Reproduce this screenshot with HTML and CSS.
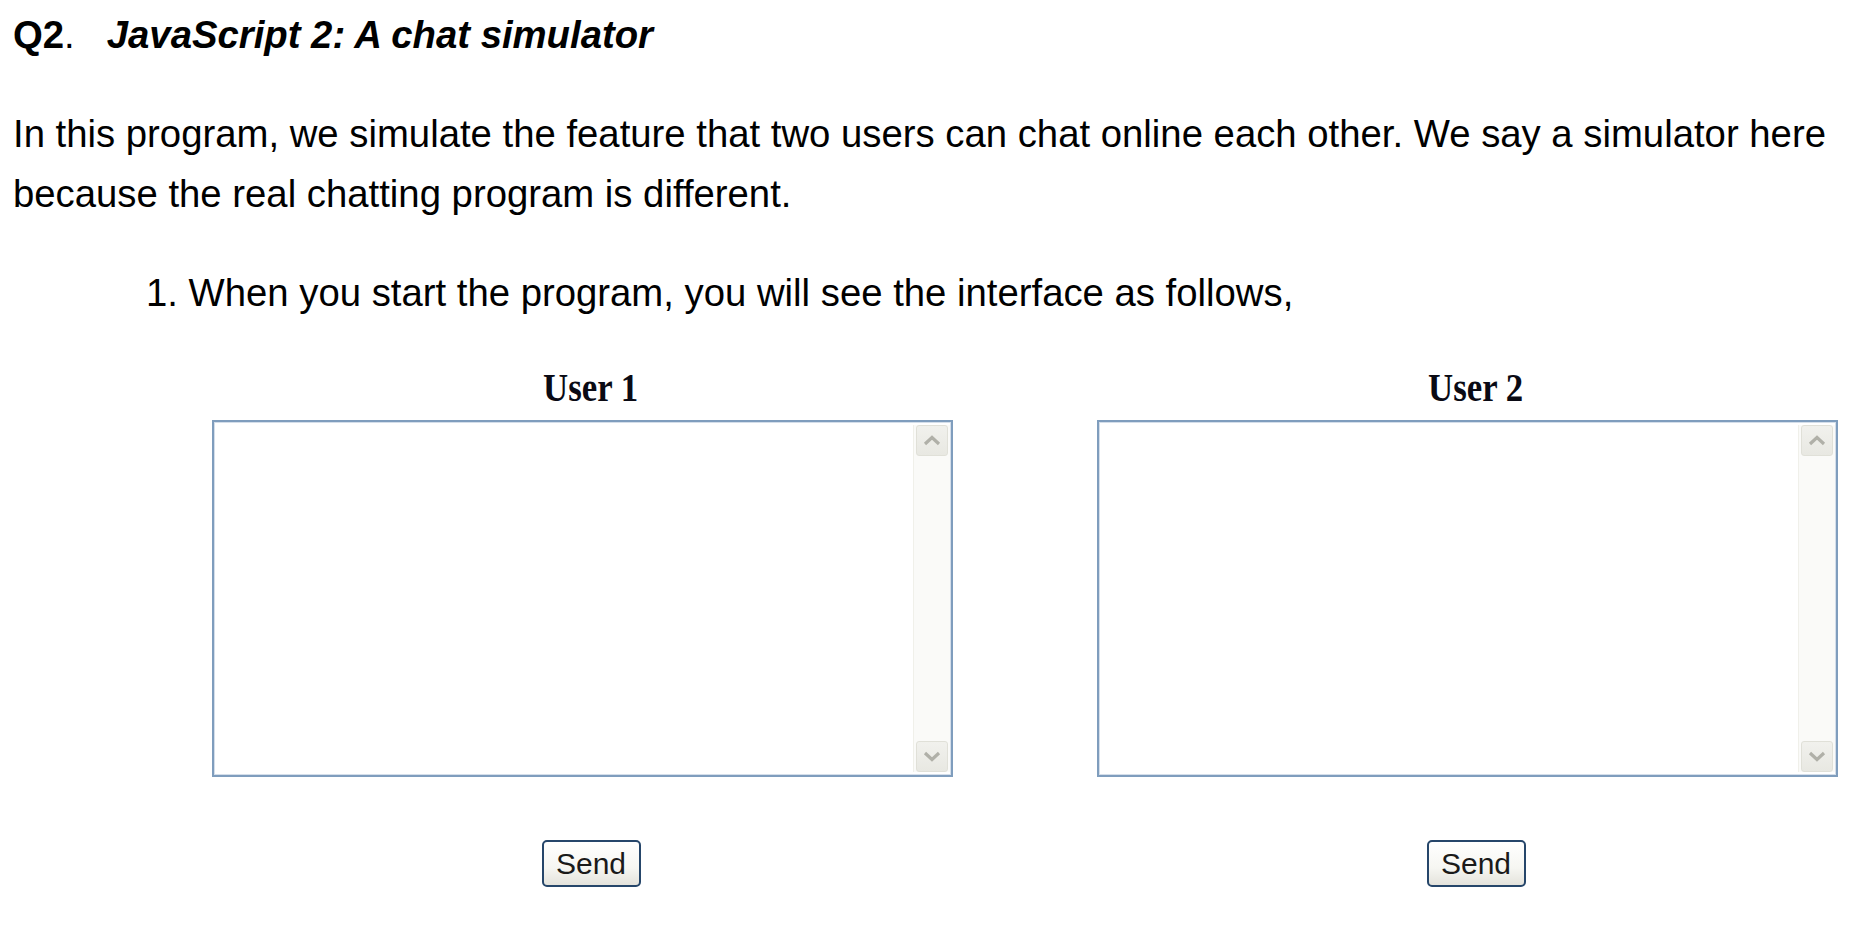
FILE: index.html
```html
<!DOCTYPE html>
<html>
<head>
<meta charset="utf-8">
<title>Q2 JavaScript 2: A chat simulator</title>
<link rel="stylesheet" href="styles.css">
</head>
<body>
<div class="page">
  <h2 class="q-head"><span class="q-num">Q2</span><span class="q-dot">.</span><span class="q-title">JavaScript 2: A chat simulator</span></h2>
  <p class="intro">In this program, we simulate the feature that two users can chat online each other. We say a simulator here because the real chatting program is different.</p>
  <div class="step">1. When you start the program, you will see the interface as follows,</div>
  <div class="chat">
    <div class="user-col">
      <div class="user-label"><span class="label-text">User 1</span></div>
      <div class="chat-box">
        <div class="scrollbar">
          <div class="sb-btn"><svg width="18" height="11" viewBox="0 0 18 11"><path d="M2 9 L9 2.5 L16 9" fill="none" stroke="#b0b0a8" stroke-width="3.2"/></svg></div>
          <div class="sb-track"></div>
          <div class="sb-btn"><svg width="18" height="11" viewBox="0 0 18 11"><path d="M2 2 L9 8.5 L16 2" fill="none" stroke="#b0b0a8" stroke-width="3.2"/></svg></div>
        </div>
      </div>
      <button class="send-btn">Send</button>
    </div>
    <div class="user-col">
      <div class="user-label"><span class="label-text">User 2</span></div>
      <div class="chat-box">
        <div class="scrollbar">
          <div class="sb-btn"><svg width="18" height="11" viewBox="0 0 18 11"><path d="M2 9 L9 2.5 L16 9" fill="none" stroke="#b0b0a8" stroke-width="3.2"/></svg></div>
          <div class="sb-track"></div>
          <div class="sb-btn"><svg width="18" height="11" viewBox="0 0 18 11"><path d="M2 2 L9 8.5 L16 2" fill="none" stroke="#b0b0a8" stroke-width="3.2"/></svg></div>
        </div>
      </div>
      <button class="send-btn">Send</button>
    </div>
  </div>
</div>
</body>
</html>
```

FILE: styles.css
```css
html, body {
  margin: 0;
  padding: 0;
  background: #ffffff;
}

.page {
  padding: 12px 0 0 13px;
  font-family: "Liberation Sans", Arial, sans-serif;
  color: #000000;
  font-size: 38.3px;
}

.q-head {
  margin: 0;
  font-size: 38.3px;
  line-height: 46px;
  font-weight: normal;
}

.q-num {
  font-weight: bold;
}

.q-dot {
  font-weight: normal;
}

.q-title {
  font-weight: bold;
  font-style: italic;
  margin-left: 32px;
}

.intro {
  margin: 46px 0 0 0;
  line-height: 60px;
  width: 1840px;
}

.step {
  margin-top: 39px;
  line-height: 60px;
  padding-left: 133px;
}

.chat {
  display: flex;
  gap: 105px;
  margin-left: -13px;
  padding-left: 201px;
  margin-top: 41px;
}

.user-col {
  width: 780px;
  display: flex;
  flex-direction: column;
  align-items: center;
}

.user-label {
  font-family: "Liberation Serif", "Times New Roman", serif;
  font-weight: bold;
  font-size: 40px;
  line-height: 48px;
  height: 48px;
  text-align: center;
  color: #0a0a14;
}

.label-text {
  display: inline-block;
  transform: scaleX(0.87);
}

.chat-box {
  align-self: flex-start;
  margin-left: 11px;
  margin-top: 8px;
  width: 741px;
  height: 357px;
  box-sizing: border-box;
  border: 2px solid #7f9dbd;
  box-shadow: inset 0 0 0 1px #d4deea;
  background: #ffffff;
  display: flex;
  justify-content: flex-end;
  padding: 3px 1px 3px 0;
}

.scrollbar {
  width: 36px;
  display: flex;
  flex-direction: column;
  align-items: center;
  background: #fafaf8;
  border-left: 1px solid #f0f0ea;
}

.sb-track {
  flex: 1;
}

.sb-btn {
  width: 32px;
  height: 31px;
  box-sizing: border-box;
  border: 1px solid #e0e0d8;
  border-radius: 3px;
  background: linear-gradient(#f1f1ed, #e8e8e2);
  display: flex;
  align-items: center;
  justify-content: center;
}

.send-btn {
  margin-top: 63px;
  width: 99px;
  height: 47px;
  box-sizing: border-box;
  border: 2px solid #26466a;
  border-radius: 5px;
  background: linear-gradient(#ffffff 0%, #f6f6f2 60%, #e4e3dc 100%);
  font-family: "Liberation Sans", Arial, sans-serif;
  font-size: 30px;
  color: #1a1a1a;
  padding: 0;
  line-height: 40px;
}
```
